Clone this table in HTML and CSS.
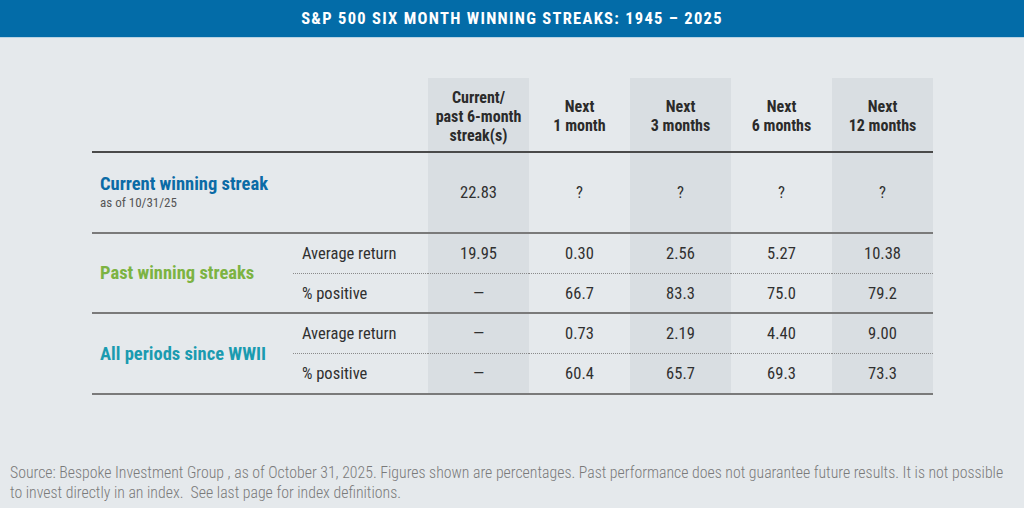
FILE: index.html
```html
<!DOCTYPE html>
<html lang="en">
<head>
<meta charset="utf-8">
<title>S&amp;P 500 six month winning streaks</title>
<link rel="stylesheet" href="styles.css">
</head>
<body>
<div class="page">
  <header class="title-bar">
    <h1 class="title">S&amp;P 500 SIX MONTH WINNING STREAKS: 1945 – 2025</h1>
  </header>
  <main class="content">
    <div class="grid">
      <div class="cell head blank"></div>
      <div class="cell head shade">Current/<br>past 6-month<br>streak(s)</div>
      <div class="cell head">Next<br>1 month</div>
      <div class="cell head shade">Next<br>3 months</div>
      <div class="cell head">Next<br>6 months</div>
      <div class="cell head shade">Next<br>12 months</div>

      <div class="cell current-label">
        <div class="grp blue">Current winning streak</div>
        <div class="asof">as of 10/31/25</div>
      </div>
      <div class="cell cur shade">22.83</div>
      <div class="cell cur">?</div>
      <div class="cell cur shade">?</div>
      <div class="cell cur">?</div>
      <div class="cell cur shade">?</div>

      <div class="cell group-label green span2">Past winning streaks</div>
      <div class="cell sub dot">Average return</div>
      <div class="cell val dot shade">19.95</div>
      <div class="cell val dot">0.30</div>
      <div class="cell val dot shade">2.56</div>
      <div class="cell val dot">5.27</div>
      <div class="cell val dot shade">10.38</div>
      <div class="cell sub solid">% positive</div>
      <div class="cell val solid shade">—</div>
      <div class="cell val solid">66.7</div>
      <div class="cell val solid shade">83.3</div>
      <div class="cell val solid">75.0</div>
      <div class="cell val solid shade">79.2</div>

      <div class="cell group-label teal span2">All periods since WWII</div>
      <div class="cell sub dot">Average return</div>
      <div class="cell val dot shade">—</div>
      <div class="cell val dot">0.73</div>
      <div class="cell val dot shade">2.19</div>
      <div class="cell val dot">4.40</div>
      <div class="cell val dot shade">9.00</div>
      <div class="cell sub solid">% positive</div>
      <div class="cell val solid shade">—</div>
      <div class="cell val solid">60.4</div>
      <div class="cell val solid shade">65.7</div>
      <div class="cell val solid">69.3</div>
      <div class="cell val solid shade">73.3</div>
    </div>
  </main>
  <footer class="note">
    Source: Bespoke Investment Group , as of October 31, 2025. Figures shown are percentages. Past performance does not guarantee future results. It is not possible<br>to invest directly in an index.&nbsp; See last page for index definitions.
  </footer>
</div>
</body>
</html>
```
FILE: styles.css
```css
* { box-sizing: border-box; }
html, body { margin: 0; padding: 0; }
body {
  background: #e5e9ec;
  font-family: "Roboto Condensed", "Liberation Sans Narrow", "Roboto", "Liberation Sans", sans-serif;
  color: #2b2b2b;
}
.page {
  width: 1024px;
  height: 508px;
  display: flex;
  flex-direction: column;
}
.title-bar {
  height: 38px;
  background: #036ca8;
  border-bottom: 1px solid #b9d3e3;
  display: flex;
  align-items: center;
  justify-content: center;
}
.title {
  margin: 0;
  color: #fff;
  font-size: 16.5px;
  font-weight: 700;
  letter-spacing: 1.3px;
}
.content {
  padding: 40px 0 0 92px;
  flex: 1;
}
.grid {
  display: grid;
  grid-template-columns: 201px 135px repeat(5, 101px);
  grid-template-rows: 75px 81px 40px 40px 40px 41px;
}
.cell {
  display: flex;
  align-items: center;
  justify-content: center;
  text-align: center;
  font-size: 16.5px;
  color: #303030;
}
.shade { background: #d9dee2; }
.head {
  font-size: 16px;
  font-weight: 700;
  line-height: 19px;
  padding-top: 3px;
  border-bottom: 2px solid #4a4a4a;
  color: #2b2b2b;
}
.blank { grid-column: span 2; }
.current-label {
  grid-column: span 2;
  flex-direction: column;
  align-items: flex-start;
  justify-content: center;
  padding: 0 0 2px 8px;
  border-bottom: 2px solid #7a7a7a;
  text-align: left;
}
.grp {
  font-size: 18.5px;
  font-weight: 700;
  line-height: 21px;
}
.asof {
  font-size: 13px;
  color: #555;
  line-height: 15px;
}
.cur { border-bottom: 2px solid #7a7a7a; }
.blue { color: #0b6ba6; }
.green { color: #7cb342; }
.teal { color: #1a9bb0; }
.group-label {
  grid-row: span 2;
  justify-content: flex-start;
  padding-left: 8px;
  font-size: 18.5px;
  font-weight: 700;
  border-bottom: 2px solid #7a7a7a;
}
.sub {
  justify-content: flex-start;
  padding-left: 9px;
}
.dot { border-bottom: 1px dotted #8a8a8a; }
.solid { border-bottom: 2px solid #7a7a7a; }
.note {
  padding: 0 10px 5px;
  font-size: 15.8px;
  font-weight: 300;
  line-height: 20px;
  color: #7a7a7a;
}
```
